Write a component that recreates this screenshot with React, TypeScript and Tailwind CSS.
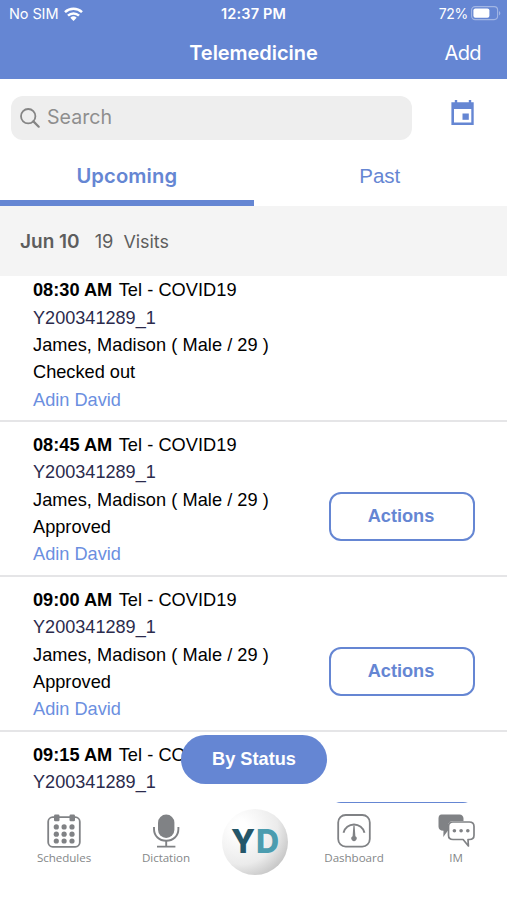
import React from 'react';

const visits = [
  { time: '08:30 AM', status: 'Checked out', actions: false },
  { time: '08:45 AM', status: 'Approved', actions: true },
  { time: '09:00 AM', status: 'Approved', actions: true },
  { time: '09:15 AM', status: 'Approved', actions: true },
];

function WifiIcon() {
  return (
    <svg width="19" height="14" viewBox="0 0 19 14" fill="none" stroke="white" strokeWidth="2.5">
      <path d="M1 5.2a12.3 12.3 0 0 1 17 0" />
      <path d="M4 8.7a8 8 0 0 1 11 0" />
      <path d="M9.5 14 6.3 10.8a4.7 4.7 0 0 1 6.4 0z" fill="white" stroke="none" />
    </svg>
  );
}

function BatteryIcon() {
  return (
    <svg width="30" height="15" viewBox="0 0 30 15" fill="none">
      <rect x="0.6" y="0.6" width="26" height="13" rx="3.5" stroke="white" strokeOpacity="0.4" strokeWidth="1.1" />
      <rect x="2.4" y="2.4" width="16" height="9.4" rx="2" fill="white" />
      <path d="M28 5v4.4c1.8-.8 1.8-3.6 0-4.4z" fill="white" fillOpacity="0.4" />
    </svg>
  );
}

function SearchIcon() {
  return (
    <svg width="20" height="20" viewBox="0 0 20 20" fill="none" stroke="#858585" strokeLinecap="round">
      <circle cx="8.2" cy="8.2" r="7.2" strokeWidth="1.8" />
      <path d="m13.4 13.4 5.3 5.3" strokeWidth="2.2" />
    </svg>
  );
}

function CalendarIcon() {
  return (
    <svg className="mb-[10px] ml-[39px]" width="24" height="26" viewBox="0 0 24 26" fill="#6586d3">
      <path d="M.4 2.3h3.4V0h2.4v2.3h11.6V0h2.4v2.3h2.5v22.8H.4zM3 9v13.6h17.3V9z" fillRule="evenodd" />
      <rect x="11.5" y="13.5" width="6.3" height="6.3" />
    </svg>
  );
}

function SchedulesIcon() {
  return (
    <svg width="38" height="36" viewBox="0 0 38 36" fill="#808285">
      <rect x="3.2" y="4.2" width="31.6" height="29.6" rx="4.5" fill="none" stroke="#808285" strokeWidth="1.8" />
      <rect x="9" y="1.5" width="5.5" height="6.8" rx="1.2" />
      <rect x="24.5" y="1.5" width="5.5" height="6.8" rx="1.2" />
      {[13.9, 21.2, 28].map((y) =>
        [11.3, 19.1, 27].map((x) => <circle key={`${x}-${y}`} cx={x} cy={y} r="2.6" />)
      )}
    </svg>
  );
}

function DictationIcon() {
  return (
    <svg width="38" height="36" viewBox="0 0 38 36" fill="none" stroke="#808285" strokeWidth="1.9">
      <rect x="11" y="1.5" width="16.4" height="23.4" rx="8.2" fill="#808285" stroke="none" />
      <path d="M7 14v2c0 7 5.2 11.8 12.2 11.8S31.4 23 31.4 16v-2" />
      <path d="M19.2 28v5.6M10 33.6h18.4" />
    </svg>
  );
}

function DashboardIcon() {
  return (
    <svg width="38" height="36" viewBox="0 0 38 36" fill="none" stroke="#808285">
      <rect x="3.2" y="2" width="31.6" height="31.6" rx="7.5" strokeWidth="1.8" />
      <path d="M8.5 19.8a10.8 10.8 0 0 1 21 0" strokeWidth="1.9" />
      <path d="M18.4 12.5h1.2l.8 10.8a2.6 2.6 0 1 1-2.8 0z" fill="#808285" stroke="none" />
    </svg>
  );
}

function MessagesIcon() {
  return (
    <svg className="overflow-visible" width="38" height="36" viewBox="0 0 38 36" fill="none">
      <path d="M4.5 1.5h18c2.5 0 4 1.7 4 4V8h-10c-4 0-5.5 2.3-5.5 5v4.5L6.3 24l.2-6.2c-3.4 0-5-1.5-5-4.2V5.5c0-2.5 1.2-4 3-4z" fill="#808285" />
      <path d="M16 9h16.3c3 0 4.7 1.6 4.7 4.5v8.7c0 2.8-1.7 4.3-4.5 4.3H31l.4 6.5-5.3-6.5H16c-3 0-4.5-1.5-4.5-4.3v-8.7C11.5 10.600 13 9 16 9z" fill="white" stroke="#808285" strokeWidth="1.7" strokeLinejoin="round" />
      <g fill="#808285">
        <circle cx="17.4" cy="17.8" r="1.8" />
        <circle cx="24.1" cy="17.8" r="1.8" />
        <circle cx="30.8" cy="17.8" r="1.8" />
      </g>
    </svg>
  );
}

function Tab({ icon, label }: { icon: React.ReactNode; label: string }) {
  return (
    <button className="flex w-[102px] flex-col items-center pt-[10px]">
      {icon}
      <span className="mt-px font-['Open_Sans',sans-serif] text-[11.6px] leading-4 tracking-[-0.05px] text-[#858789]">
        {label}
      </span>
    </button>
  );
}

export default function App() {
  return (
    <div className="flex h-[900px] w-[507px] flex-col overflow-hidden bg-white font-['Liberation_Sans',Arial,sans-serif]">
      {/* Status bar and title */}
      <header className="h-[79px] shrink-0 bg-[#6586d3] font-[Inter,sans-serif] text-white">
        <div className="grid h-[27px] grid-cols-3 items-center px-[6px] text-[14px]">
          <div className="flex items-center gap-[6px] pl-[3px]">
            <span className="text-[14.5px] tracking-[-0.1px]">No SIM</span>
            <WifiIcon />
          </div>
          <span className="text-center text-[14.5px] font-semibold tracking-[0.15px]">12:37 PM</span>
          <div className="flex items-center justify-end gap-[3px]">
            <span className="tracking-[-0.3px]">72%</span>
            <BatteryIcon />
          </div>
        </div>
        <div className="grid h-[51px] grid-cols-3 items-center">
          <h1 className="col-start-2 text-center text-[20px] font-semibold tracking-[-0.05px]">Telemedicine</h1>
          <button className="justify-self-end pr-[26px] text-[20px] tracking-[-0.6px]">Add</button>
        </div>
      </header>

      {/* Search */}
      <div className="flex h-[77px] shrink-0 items-center pl-[11px]">
        <div className="flex h-[44px] w-[401px] items-center gap-[7px] rounded-[12px] bg-[#eeeeee] pl-[9px]">
          <SearchIcon />
          <span className="pt-px font-[Inter,sans-serif] text-[19.6px] text-[#8e8e8e]">Search</span>
        </div>
        <CalendarIcon />
      </div>

      {/* Tabs */}
      <div className="grid h-[50px] shrink-0 grid-cols-2 text-[20.5px] text-[#6586d3]">
        <button className="border-b-[6px] border-[#6586d3] pb-[4px] font-[Inter,sans-serif] text-[20.2px] font-semibold tracking-[0.1px]">
          Upcoming
        </button>
        <button className="pb-[10px] pr-px">Past</button>
      </div>

      <div className="flex h-[70px] shrink-0 items-center bg-[#f4f4f4] pl-[20px] pt-[2px] font-[Inter,sans-serif] text-[#5d5d5d]">
        <span className="text-[19px] font-semibold">Jun 10</span>
        <span className="ml-[15px] text-[18.3px]">19</span>
        <span className="ml-[10px] text-[17.9px]">Visits</span>
      </div>

      {/* Visits */}
      <main className="relative min-h-0 flex-1 overflow-hidden">
        <div className="-mt-[9px]">
          {visits.map((visit) => (
            <div key={visit.time} className="flex h-[154.9px] border-b-2 border-[#e5e5e7] pl-[33px] pr-[32px] pt-[10.2px]">
              <div className="flex-1 text-[18.2px] leading-[27.35px] text-black">
                <p>
                  <b>{visit.time}</b>
                  <span className="ml-[6.5px] tracking-[0.05px]">Tel - COVID19</span>
                </p>
                <p className="text-[18.1px] text-[#2b2b4d]">Y200341289_1</p>
                <p className="tracking-[0.05px]">James, Madison ( Male / 29 )</p>
                <p>{visit.status}</p>
                <p className="text-[#6b8fdf]">Adin David</p>
              </div>
              {visit.actions && (
                <button className="mt-[60px] h-[49px] w-[146px] rounded-[12px] border-2 border-[#6586d3] pr-[2px] text-[18.2px] font-bold text-[#6586d3]">
                  Actions
                </button>
              )}
            </div>
          ))}
        </div>
        <button className="absolute bottom-[19px] left-[181px] h-[49px] w-[146px] rounded-full bg-[#6586d3] pt-px text-[18.2px] font-bold text-white">
          By Status
        </button>
      </main>

      <nav className="flex h-[97px] shrink-0 bg-white pl-[13px]">
        <Tab icon={<SchedulesIcon />} label="Schedules" />
        <Tab icon={<DictationIcon />} label="Dictation" />
        <div className="w-[86px] shrink-0 pl-[5px]">
          <div className="mt-[6px] flex size-[66px] items-center justify-center gap-px rounded-full bg-radial-[at_28%_28%] from-white from-10% via-[#ebebeb] via-55% to-[#a8a8a8] pb-px font-[Inter,sans-serif] text-[32px] font-extrabold">
            <span className="text-[#245669]">Y</span>
            <span className="text-[#4b9caf]">D</span>
          </div>
        </div>
        <Tab icon={<DashboardIcon />} label="Dashboard" />
        <Tab icon={<MessagesIcon />} label="IM" />
      </nav>
    </div>
  );
}
